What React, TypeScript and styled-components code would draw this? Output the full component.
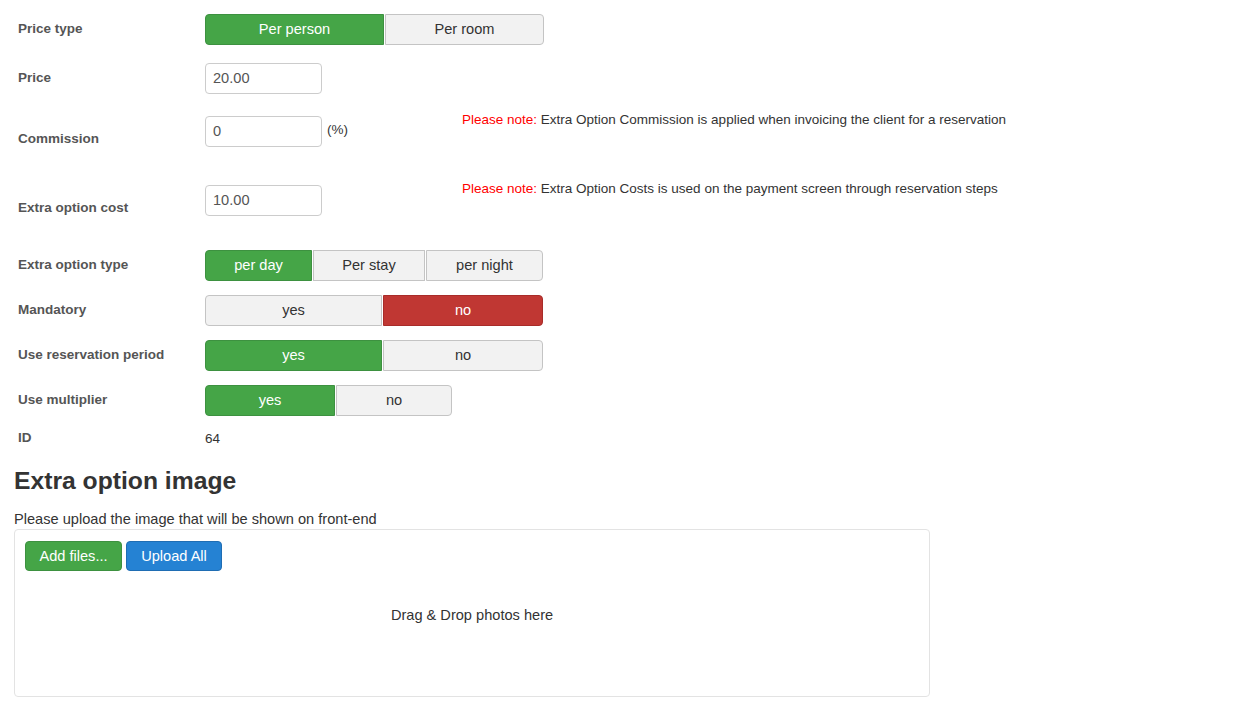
import React from 'react';
import styled, { createGlobalStyle } from 'styled-components';

// ============= 全域樣式 =============

const GlobalStyle = createGlobalStyle`
  html, body {
    margin: 0;
    padding: 0;
    background: #fff;
  }
  body {
    font-family: "Liberation Sans", Arial, sans-serif;
    font-size: 14.6px;
    color: #333;
  }
`;

// ============= 樣式定義 =============

const Page = styled.div`
  display: flex;
  flex-direction: column;
  padding: 0 14px;
`;

const Row = styled.div<{ $mt: number; $h?: number }>`
  display: flex;
  align-items: flex-start;
  margin-top: ${p => p.$mt}px;
  min-height: ${p => p.$h ?? 31}px;
`;

const Label = styled.div`
  width: 191px;
  padding-left: 4px;
  padding-bottom: 2px;
  box-sizing: border-box;
  align-self: center;
  font-size: 13.5px;
  font-weight: 700;
  color: #555;
  line-height: 16px;
`;

const Value = styled.div`
  align-self: center;
  font-size: 13.5px;
  color: #333;
  line-height: 16px;
`;

const Group = styled.div`
  display: flex;
  gap: 1px;
`;

type Tone = 'green' | 'red' | 'plain';

const tones: Record<Tone, { bg: string; border: string; color: string }> = {
  green: { bg: '#45a547', border: '#3d9140', color: '#fff' },
  red: { bg: '#c03733', border: '#a82c29', color: '#fff' },
  plain: { bg: '#f2f2f2', border: '#c4c4c4', color: '#333' },
};

const ToggleBtn = styled.div<{ $tone: Tone; $w: number; $first?: boolean; $last?: boolean }>`
  width: ${p => p.$w}px;
  height: 31px;
  box-sizing: border-box;
  display: flex;
  align-items: center;
  justify-content: center;
  padding-bottom: 1px;
  font-size: 14.6px;
  background: ${p => tones[p.$tone].bg};
  border: 1px solid ${p => tones[p.$tone].border};
  color: ${p => tones[p.$tone].color};
  border-radius: ${p =>
    `${p.$first ? 4 : 0}px ${p.$last ? 4 : 0}px ${p.$last ? 4 : 0}px ${p.$first ? 4 : 0}px`};
  cursor: pointer;
`;

const Input = styled.input`
  width: 117px;
  height: 31px;
  box-sizing: border-box;
  border: 1px solid #ccc;
  border-radius: 4px;
  padding: 0 7px 2px;
  font-family: "Liberation Sans", Arial, sans-serif;
  font-size: 14.6px;
  color: #555;
  outline: none;
`;

const Suffix = styled.span`
  font-size: 13.5px;
  color: #333;
  margin-left: 5px;
  line-height: 28px;
`;

const InputWrap = styled.div`
  display: flex;
  align-items: flex-start;
  width: 257px;
`;

const Note = styled.div`
  font-size: 13.5px;
  line-height: 16px;
  margin-top: -4px;
  color: #333;
`;

const NoteLead = styled.span`
  color: #ff0000;
`;

const Heading = styled.h2`
  margin: 20px 0 0;
  font-size: 24.7px;
  line-height: 26px;
  font-weight: 700;
  color: #333;
`;

const Intro = styled.p`
  margin: 15px 0 0;
  font-size: 14.6px;
  line-height: 20px;
  color: #333;
`;

const UploadBox = styled.div`
  width: 916px;
  height: 168px;
  box-sizing: border-box;
  border: 1px solid #e3e3e3;
  border-radius: 4px;
  padding: 11px 10px;
  display: flex;
  flex-direction: column;
`;

const UploadBar = styled.div`
  display: flex;
  gap: 4px;
`;

const ActionBtn = styled.button<{ $tone: 'green' | 'blue'; $w: number }>`
  width: ${p => p.$w}px;
  height: 30px;
  box-sizing: border-box;
  border-radius: 4px;
  font-family: "Liberation Sans", Arial, sans-serif;
  font-size: 14.6px;
  color: #fff;
  background: ${p => (p.$tone === 'green' ? '#45a547' : '#2582d3')};
  border: 1px solid ${p => (p.$tone === 'green' ? '#3d9140' : '#1f6db3')};
  padding: 0 0 1px;
  cursor: pointer;
`;

const DropZone = styled.div`
  text-align: center;
  margin-top: 35px;
  font-size: 14.6px;
  line-height: 18px;
  color: #333;
`;

// ============= 組件實現 =============

interface ToggleOption {
  text: string;
  w: number;
  tone: Tone;
}

const Toggle: React.FC<{ options: ToggleOption[] }> = ({ options }) => (
  <Group>
    {options.map((o, i) => (
      <ToggleBtn
        key={o.text}
        $tone={o.tone}
        $w={o.w}
        $first={i === 0}
        $last={i === options.length - 1}
      >
        {o.text}
      </ToggleBtn>
    ))}
  </Group>
);

export default function App() {
  return (
    <>
      <GlobalStyle />
      <Page>
        <Row $mt={14}>
          <Label>Price type</Label>
          <Toggle
            options={[
              { text: 'Per person', w: 179, tone: 'green' },
              { text: 'Per room', w: 159, tone: 'plain' },
            ]}
          />
        </Row>

        <Row $mt={18}>
          <Label>Price</Label>
          <Input defaultValue="20.00" />
        </Row>

        <Row $mt={22} $h={48}>
          <Label>Commission</Label>
          <InputWrap>
            <Input defaultValue="0" />
            <Suffix>(%)</Suffix>
          </InputWrap>
          <Note>
            <NoteLead>Please note:</NoteLead> Extra Option Commission is applied when invoicing the client for a reservation
          </Note>
        </Row>

        <Row $mt={21} $h={48}>
          <Label>Extra option cost</Label>
          <InputWrap>
            <Input defaultValue="10.00" />
          </InputWrap>
          <Note>
            <NoteLead>Please note:</NoteLead> Extra Option Costs is used on the payment screen through reservation steps
          </Note>
        </Row>

        <Row $mt={17}>
          <Label>Extra option type</Label>
          <Toggle
            options={[
              { text: 'per day', w: 107, tone: 'green' },
              { text: 'Per stay', w: 112, tone: 'plain' },
              { text: 'per night', w: 117, tone: 'plain' },
            ]}
          />
        </Row>

        <Row $mt={14}>
          <Label>Mandatory</Label>
          <Toggle
            options={[
              { text: 'yes', w: 177, tone: 'plain' },
              { text: 'no', w: 160, tone: 'red' },
            ]}
          />
        </Row>

        <Row $mt={14}>
          <Label>Use reservation period</Label>
          <Toggle
            options={[
              { text: 'yes', w: 177, tone: 'green' },
              { text: 'no', w: 160, tone: 'plain' },
            ]}
          />
        </Row>

        <Row $mt={14}>
          <Label>Use multiplier</Label>
          <Toggle
            options={[
              { text: 'yes', w: 130, tone: 'green' },
              { text: 'no', w: 116, tone: 'plain' },
            ]}
          />
        </Row>

        <Row $mt={14} $h={18}>
          <Label>ID</Label>
          <Value>64</Value>
        </Row>

        <Heading>Extra option image</Heading>
        <Intro>Please upload the image that will be shown on front-end</Intro>

        <UploadBox>
          <UploadBar>
            <ActionBtn $tone="green" $w={97}>Add files...</ActionBtn>
            <ActionBtn $tone="blue" $w={96}>Upload All</ActionBtn>
          </UploadBar>
          <DropZone>Drag &amp; Drop photos here</DropZone>
        </UploadBox>
      </Page>
    </>
  );
}
